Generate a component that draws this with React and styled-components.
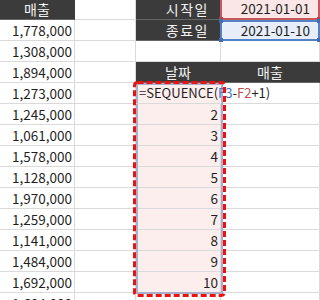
import React from 'react';
import styled, { createGlobalStyle } from 'styled-components';

const GlobalStyle = createGlobalStyle`
  html, body {
    margin: 0;
    padding: 0;
    background: #ffffff;
    overflow: hidden;
  }
  body {
    font-family: 'Noto Sans CJK KR', 'Noto Sans', sans-serif;
  }
`;

const Sheet = styled.div`
  display: grid;
  grid-template-columns: 75px 61px 85px 99px;
  grid-template-rows: repeat(15, 21px);
  width: 320px;
  margin-top: -1px;
  font-size: 13.5px;
  color: #1f1f1f;
`;

const Cell = styled.div`
  box-sizing: border-box;
  height: 21px;
  border-right: 1px solid #dadada;
  border-bottom: 1px solid #dadada;
  padding: 0 ${(p) => p.$pad || '2px'};
  line-height: 20px;
  text-align: ${(p) => p.$align || 'left'};
  white-space: nowrap;
`;

const HeadCell = styled(Cell)`
  background: #3b3b3b;
  color: #f2f2f2;
  font-size: 14px;
  border-right-color: #3b3b3b;
  border-bottom-color: #666666;
  text-align: ${(p) => p.$align || 'center'};
  letter-spacing: ${(p) => p.$spread || '0'};
`;

const RefCell = styled(Cell)`
  position: relative;
  margin-left: -1px;
  padding-right: 8px;
  text-align: right;
  background: ${(p) => p.$fill};
  border: 2px solid ${(p) => p.$line};
  border-top-width: ${(p) => (p.$open ? '0' : '2px')};
  line-height: ${(p) => (p.$open ? '19px' : '17px')};
`;

const Handle = styled.span`
  position: absolute;
  width: 4px;
  height: 4px;
  background: ${(p) => p.$color};
  ${(p) => p.$v}: -3px;
  ${(p) => p.$h}: -3px;
`;

const SpillRange = styled.div`
  grid-column: 3;
  grid-row: 5 / 15;
  position: relative;
  display: flex;
  flex-direction: column;
  min-width: 0;
  background: #fdeeee;

  &::after {
    content: '';
    position: absolute;
    top: 0;
    left: 0;
    right: -2px;
    bottom: -1px;
    border: 2px solid #a9aecb;
    pointer-events: none;
  }
`;

const SpillCell = styled(Cell)`
  text-align: right;
  padding-right: 2px;
`;

const FormulaCell = styled(Cell)`
  position: relative;
  z-index: 2;
  padding-left: 3px;
  font-size: 13px;
  border-right-color: transparent;
  overflow: visible;
`;

const Ref = styled.span`
  color: ${(p) => p.$color};
`;

const Marquee = styled.svg`
  position: absolute;
  left: -3px;
  top: -2px;
  z-index: 3;
  pointer-events: none;
`;

const sales = [
  '1,778,000',
  '1,308,000',
  '1,894,000',
  '1,273,000',
  '1,245,000',
  '1,061,000',
  '1,578,000',
  '1,128,000',
  '1,970,000',
  '1,259,000',
  '1,141,000',
  '1,484,000',
  '1,692,000',
  '1,604,000',
];

const red = { fill: '#fae6e6', line: '#c9585a', dot: '#b04446' };
const blue = { fill: '#e7eef9', line: '#5183c6', dot: '#3f6fb0' };

const Corners = ({ color, top = true }) => (
  <>
    {top && <Handle $color={color} $v="top" $h="left" />}
    {top && <Handle $color={color} $v="top" $h="right" />}
    <Handle $color={color} $v="bottom" $h="left" />
    <Handle $color={color} $v="bottom" $h="right" />
  </>
);

const App = () => {
  const numbers = [2, 3, 4, 5, 6, 7, 8, 9, 10];

  const rowC = (i) => {
    if (i === 0) return <HeadCell $align="right" $pad="11px" $spread="1.5px">시작일</HeadCell>;
    if (i === 1) return <HeadCell $align="right" $pad="11px" $spread="1.5px">종료일</HeadCell>;
    if (i === 3) return <HeadCell>날짜</HeadCell>;
    if (i >= 4 && i <= 13) return null;
    return <Cell />;
  };

  const rowD = (i) => {
    if (i === 0)
      return (
        <RefCell $fill={red.fill} $line={red.line} $open>
          2021-01-01
          <Corners color={red.dot} top={false} />
        </RefCell>
      );
    if (i === 1)
      return (
        <RefCell $fill={blue.fill} $line={blue.line}>
          2021-01-10
          <Corners color={blue.dot} />
        </RefCell>
      );
    if (i === 3) return <HeadCell>매출</HeadCell>;
    return <Cell />;
  };

  return (
    <>
      <GlobalStyle />
      <Sheet>
        {Array.from({ length: 15 }).map((_, i) => (
          <React.Fragment key={i}>
            {i === 0 ? (
              <HeadCell>매출</HeadCell>
            ) : (
              <Cell $align="right">{sales[i - 1]}</Cell>
            )}
            <Cell />
            {i === 4 && (
              <SpillRange>
                <FormulaCell>
                  =SEQUENCE(<Ref $color="#4472c4">F3</Ref>-
                  <Ref $color="#c0504d">F2</Ref>+1)
                </FormulaCell>
                {numbers.map((n) => (
                  <SpillCell key={n}>{n}</SpillCell>
                ))}
                <Marquee width="93" height="216" viewBox="0 0 93 216">
                  <rect
                    x="1.5"
                    y="1.5"
                    width="90"
                    height="213"
                    rx="3"
                    fill="none"
                    stroke="#ee1111"
                    strokeWidth="3"
                    strokeDasharray="6 3"
                  />
                </Marquee>
              </SpillRange>
            )}
            {rowC(i)}
            {rowD(i)}
          </React.Fragment>
        ))}
      </Sheet>
    </>
  );
};

export default App;
